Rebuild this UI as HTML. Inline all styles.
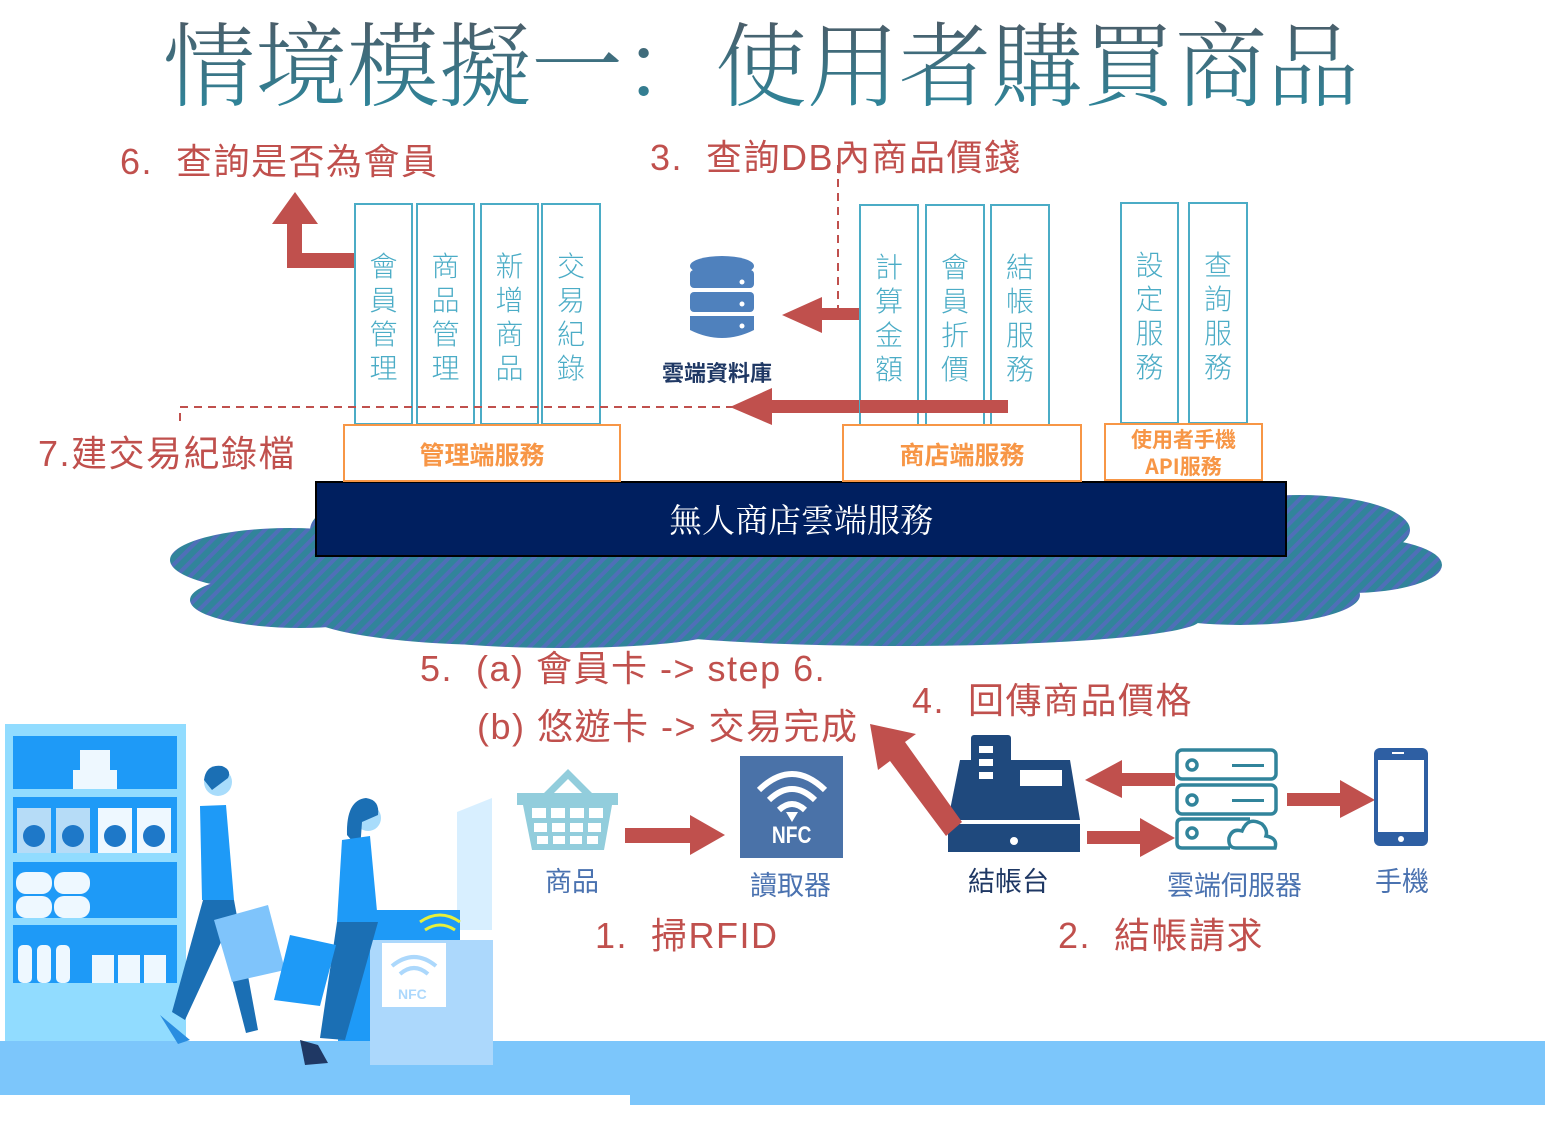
<!DOCTYPE html>
<html><head><meta charset="utf-8">
<style>
html,body{margin:0;padding:0;background:#fff;}
body{width:1545px;height:1128px;position:relative;overflow:hidden;font-family:"Liberation Sans","Noto Sans CJK TC",sans-serif;}
.t{position:absolute;white-space:nowrap;line-height:1;}
.red{color:#c0504d;font-size:36px;letter-spacing:1.5px;}
.col{position:absolute;border:2px solid #4bacc6;box-sizing:border-box;background:#fff;color:#4bacc6;font-size:28px;text-align:center;line-height:34px;padding-top:43px;font-family:"Noto Sans CJK TC",sans-serif;font-weight:300;}
.ob{position:absolute;border:2px solid #f79646;box-sizing:border-box;background:#fff;color:#f79646;font-weight:bold;text-align:center;font-family:"Noto Sans CJK TC",sans-serif;}
.lab{position:absolute;white-space:nowrap;font-size:27px;line-height:1;color:#4a72b0;font-family:"Noto Sans CJK TC",sans-serif;}
</style></head><body>
<svg width="1545" height="1128" style="position:absolute;left:0;top:0">
<defs>
<pattern id="st" width="10" height="10" patternUnits="userSpaceOnUse" patternTransform="rotate(45)">
<rect width="10" height="10" fill="#31849b"/><rect width="4" height="10" fill="#4f6fb8"/>
</pattern>
</defs>
<g fill="url(#st)">
<ellipse cx="290" cy="560" rx="120" ry="32"/>
<ellipse cx="300" cy="600" rx="110" ry="28"/>
<ellipse cx="420" cy="530" rx="110" ry="40"/>
<ellipse cx="500" cy="610" rx="200" ry="35"/>
<ellipse cx="800" cy="560" rx="520" ry="70"/>
<ellipse cx="900" cy="620" rx="300" ry="26"/>
<ellipse cx="1300" cy="530" rx="110" ry="35"/>
<ellipse cx="1350" cy="565" rx="92" ry="28"/>
<ellipse cx="1240" cy="595" rx="120" ry="30"/>
<ellipse cx="560" cy="630" rx="160" ry="18"/>
</g>
<rect x="316" y="482" width="970" height="74" fill="#001f5f" stroke="#000" stroke-width="2"/>
<path d="M838 165 V310" stroke="#c0504d" stroke-width="2" stroke-dasharray="8 6" fill="none"/>
<path d="M354 253 H302 V224 H318 L295 192 L272 224 H287 V268 H354 Z" fill="#c0504d"/>
<path d="M860 308 H822 V297 L782 315 L822 333 V320 H860 Z" fill="#c0504d"/>
<path d="M1008 400 H772 V388 L730 407 L772 425 V413 H1008 Z" fill="#c0504d"/>
<g fill="#4f81bd">
<ellipse cx="722" cy="266" rx="32" ry="10"/>
<rect x="690" y="270" width="64" height="18" rx="4"/>
<rect x="690" y="292" width="64" height="20" rx="4"/>
<path d="M690 316 H754 V330 Q722 346 690 330 Z"/>
</g>
<g fill="#fff"><circle cx="742" cy="282" r="2.5"/><circle cx="742" cy="304" r="2.5"/><circle cx="742" cy="326" r="2.5"/></g>
<g stroke="#92cddc" fill="none" stroke-width="7"><path d="M544 798 L568 774 L592 798"/></g>
<path d="M517 793 H618 V805 H612 L604 850 H532 L523 805 H517 Z" fill="#92cddc"/>
<g fill="#fff">
<rect x="532" y="808" width="14" height="10"/><rect x="551" y="808" width="14" height="10"/><rect x="570" y="808" width="14" height="10"/><rect x="589" y="808" width="14" height="10"/>
<rect x="534" y="823" width="13" height="9"/><rect x="552" y="823" width="13" height="9"/><rect x="570" y="823" width="13" height="9"/><rect x="588" y="823" width="13" height="9"/>
<rect x="537" y="836" width="11" height="8"/><rect x="553" y="836" width="12" height="8"/><rect x="570" y="836" width="12" height="8"/><rect x="587" y="836" width="11" height="8"/>
</g>
<path d="M625 828 H690 V815 L725 835 L690 855 V843 H625 Z" fill="#c0504d"/>
<rect x="740" y="756" width="103" height="102" fill="#4a72a8"/>
<g fill="none" stroke="#fff" stroke-width="6">
<path d="M759 790 Q792 758 825 790"/><path d="M769 800 Q792 778 815 800"/><path d="M779 810 Q792 798 805 810"/>
</g>
<path d="M786 812 L792 822 L798 812 Z" fill="#fff"/>
<g fill="#1f497d">
<rect x="971" y="735" width="40" height="52" rx="3"/>
<rect x="960" y="762" width="110" height="25"/>
<path d="M960 760 H1070 L1080 820 H948 Z"/>
<rect x="948" y="824" width="132" height="28"/>
</g>
<g fill="#fff">
<rect x="979" y="746" width="14" height="7"/><rect x="979" y="759" width="14" height="7"/><rect x="979" y="772" width="14" height="7"/>
<rect x="1020" y="770" width="42" height="16"/>
<circle cx="1014" cy="841" r="4"/>
</g>
<path d="M962 822 L905 742 L916 734 L870 724 L878 770 L890 761 L946 836 Z" fill="#c0504d"/>
<path d="M1175 773 H1122 V760 L1085 780 L1122 798 V786 H1175 Z" fill="#c0504d"/>
<path d="M1087 831 H1140 V818 L1175 838 L1140 857 V844 H1087 Z" fill="#c0504d"/>
<path d="M1287 793 H1340 V780 L1375 800 L1340 818 V806 H1287 Z" fill="#c0504d"/>
<g fill="none" stroke="#31849b" stroke-width="3.5">
<rect x="1177" y="750" width="99" height="29" rx="5"/>
<rect x="1177" y="785" width="99" height="29" rx="5"/>
<path d="M1230 848 H1182 Q1177 848 1177 843 V824 Q1177 819 1182 819 H1250"/>
<circle cx="1192" cy="765" r="5"/><circle cx="1192" cy="800" r="5"/><circle cx="1192" cy="833" r="5"/>
<path d="M1236 848 Q1228 848 1229 838 Q1232 828 1242 831 Q1248 816 1262 824 Q1268 830 1266 836 Q1278 838 1275 848 Z"/>
</g>
<g fill="#31849b"><rect x="1232" y="764" width="32" height="3"/><rect x="1232" y="799" width="32" height="3"/></g>
<rect x="1374" y="748" width="54" height="98" rx="6" fill="#2e5fa3"/>
<rect x="1378" y="760" width="46" height="72" fill="#fff"/>
<circle cx="1401" cy="839" r="3" fill="#fff"/>
<rect x="1392" y="752" width="12" height="2" fill="#fff"/>
<rect x="0" y="1041" width="1545" height="54" fill="#7cc6fb"/>
<rect x="630" y="1041" width="915" height="64" fill="#7cc6fb"/>
<rect x="5" y="724" width="181" height="317" fill="#91dcff"/>
<rect x="13" y="736" width="164" height="53" fill="#1e9af7"/>
<rect x="13" y="797" width="164" height="56" fill="#1e9af7"/>
<rect x="13" y="862" width="164" height="56" fill="#1e9af7"/>
<rect x="13" y="925" width="164" height="58" fill="#1e9af7"/>
<g fill="#eef8ff">
<rect x="73" y="770" width="44" height="19"/><rect x="80" y="750" width="30" height="20"/>
<rect x="17" y="808" width="34" height="45" fill="#b6dcf7"/><rect x="56" y="808" width="34" height="45" fill="#b6dcf7"/><rect x="98" y="808" width="34" height="45"/><rect x="137" y="808" width="34" height="45"/>
<rect x="16" y="872" width="36" height="22" rx="10"/><rect x="54" y="872" width="36" height="22" rx="10"/>
<rect x="16" y="896" width="36" height="22" rx="10"/><rect x="54" y="896" width="36" height="22" rx="10"/>
<rect x="18" y="945" width="14" height="38" rx="5"/><rect x="37" y="945" width="14" height="38" rx="5"/><rect x="56" y="945" width="14" height="38" rx="5"/>
<rect x="92" y="955" width="22" height="28"/><rect x="118" y="955" width="22" height="28"/><rect x="144" y="955" width="22" height="28"/>
</g>
<g fill="#1e78c8"><circle cx="34" cy="836" r="11"/><circle cx="73" cy="836" r="11"/><circle cx="115" cy="836" r="11"/><circle cx="154" cy="836" r="11"/></g>
<path d="M457 812 L492 798 V930 H457 Z" fill="#d8efff"/>
<rect x="338" y="910" width="122" height="131" fill="#1e9af7"/>
<rect x="370" y="940" width="123" height="125" fill="#acd8fc"/>
<rect x="382" y="943" width="64" height="64" fill="#fff"/>
<g fill="none" stroke="#acd8fc" stroke-width="4"><path d="M392 966 Q414 948 436 966"/><path d="M400 974 Q414 962 428 974"/></g>
<g fill="none" stroke="#e6f03c" stroke-width="3"><path d="M420 922 Q440 908 460 922"/><path d="M425 930 Q440 920 455 930"/></g>
<g>
<circle cx="218" cy="782" r="14" fill="#a8dcfb"/>
<path d="M204 780 Q206 764 222 766 Q232 770 228 778 L212 790 Z" fill="#1b6fb4"/>
<path d="M200 806 L226 805 L234 900 L202 900 Z" fill="#1e9af7"/>
<path d="M203 900 L234 900 L258 1030 L246 1033 L222 940 L185 1020 L172 1012 Z" fill="#1b6fb4"/>
<path d="M214 920 L268 905 L285 970 L232 982 Z" fill="#7fc4fb"/>
<path d="M160 1015 L190 1040 L178 1044 Z" fill="#2a8de0"/>
</g>
<g>
<circle cx="368" cy="818" r="13" fill="#a8dcfb"/>
<path d="M347 835 Q346 800 366 798 Q380 800 378 815 L362 822 L360 850 Z" fill="#1b6fb4"/>
<path d="M342 840 L370 836 L378 922 L337 922 Z" fill="#1e9af7"/>
<path d="M337 922 L378 922 L345 1040 L320 1038 Z" fill="#1b6fb4"/>
<path d="M274 1000 L290 935 L336 945 L320 1006 Z" fill="#1e9af7"/>
<path d="M300 1040 L305 1065 L328 1063 L318 1045 Z" fill="#1f3864"/>
</g>
</svg>

<div class="t" style="left:163px;top:14px;font-size:92px;font-family:'Noto Serif CJK SC','Noto Serif CJK TC',serif;font-weight:300;background:linear-gradient(#4d5a65,#2f8499);-webkit-background-clip:text;background-clip:text;color:transparent;">情境模擬一：使用者購買商品</div>

<div class="t red" style="left:120px;top:144px;">6.&nbsp;&nbsp;查詢是否為會員</div>
<div class="t red" style="left:650px;top:140px;">3.&nbsp;&nbsp;查詢DB內商品價錢</div>
<div class="t red" style="left:38px;top:436px;">7.建交易紀錄檔</div>
<div class="t red" style="left:420px;top:651px;">5.&nbsp;&nbsp;(a) 會員卡 -&gt; step 6.</div>
<div class="t red" style="left:477px;top:709px;">(b) 悠遊卡 -&gt; 交易完成</div>
<div class="t red" style="left:912px;top:683px;">4.&nbsp;&nbsp;回傳商品價格</div>
<div class="t red" style="left:595px;top:918px;">1.&nbsp;&nbsp;掃RFID</div>
<div class="t red" style="left:1058px;top:918px;">2.&nbsp;&nbsp;結帳請求</div>

<div class="col" style="left:354px;top:203px;width:59px;height:222px;">會<br>員<br>管<br>理</div>
<div class="col" style="left:416px;top:203px;width:59px;height:222px;">商<br>品<br>管<br>理</div>
<div class="col" style="left:480px;top:203px;width:59px;height:222px;">新<br>增<br>商<br>品</div>
<div class="col" style="left:541px;top:203px;width:60px;height:222px;">交<br>易<br>紀<br>錄</div>
<div class="col" style="left:859px;top:204px;width:60px;height:222px;">計<br>算<br>金<br>額</div>
<div class="col" style="left:925px;top:204px;width:60px;height:222px;">會<br>員<br>折<br>價</div>
<div class="col" style="left:990px;top:204px;width:60px;height:222px;">結<br>帳<br>服<br>務</div>
<div class="col" style="left:1120px;top:202px;width:59px;height:222px;">設<br>定<br>服<br>務</div>
<div class="col" style="left:1188px;top:202px;width:60px;height:222px;">查<br>詢<br>服<br>務</div>

<svg width="1545" height="430" style="position:absolute;left:0;top:0;pointer-events:none">
<path d="M180 421 V407 H735" stroke="#c0504d" stroke-width="2" stroke-dasharray="8 6" fill="none"/>
<path d="M1008 400 H860 V413 H1008 Z" fill="#c0504d"/>
</svg>

<div class="ob" style="left:343px;top:424px;width:278px;height:58px;font-size:25px;line-height:56px;">管理端服務</div>
<div class="ob" style="left:842px;top:424px;width:240px;height:58px;font-size:25px;line-height:56px;">商店端服務</div>
<div class="ob" style="left:1104px;top:423px;width:159px;height:58px;font-size:21px;line-height:27px;padding-top:1px;">使用者手機<br>API服務</div>

<div class="t" style="left:316px;top:502px;width:970px;text-align:center;color:#fff;font-size:33px;font-family:'Noto Serif CJK TC','Noto Serif CJK SC',serif;">無人商店雲端服務</div>

<div class="t" style="left:662px;top:361px;font-size:22px;font-weight:bold;color:#1f3864;font-family:'Noto Sans CJK TC',sans-serif;">雲端資料庫</div>
<div class="t" style="left:767px;top:824px;font-size:24px;font-weight:bold;color:#fff;font-family:'Liberation Sans',sans-serif;transform:scaleX(0.8);">NFC</div>
<div class="t" style="left:398px;top:987px;font-size:14px;font-weight:bold;color:#acd8fc;">NFC</div>

<div class="lab" style="left:545px;top:866px;">商品</div>
<div class="lab" style="left:750px;top:870px;">讀取器</div>
<div class="lab" style="left:968px;top:866px;color:#1f3864;">結帳台</div>
<div class="lab" style="left:1167px;top:870px;">雲端伺服器</div>
<div class="lab" style="left:1375px;top:866px;">手機</div>
</body></html>
